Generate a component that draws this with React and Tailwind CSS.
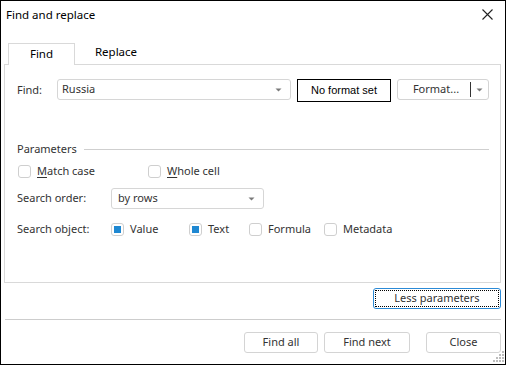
const font = "font-['Noto_Sans','Open_Sans',sans-serif]";

function Arrow() {
  return (
    <svg width="7" height="4" viewBox="0 0 7 4" className="shrink-0">
      <path d="M0.5 0.5 L6.5 0.5 L3.5 3.5 Z" fill="#7a7a7a" />
    </svg>
  );
}

function Combo({ value, className = '' }) {
  return (
    <div
      className={`flex items-center justify-between rounded-[3px] border border-[#d6d6d6] bg-white pl-[4px] pr-[8px] text-[11px] text-[#333] ${className}`}
    >
      <span>{value}</span>
      <Arrow />
    </div>
  );
}

function Check({ checked, label, underline, className = '' }) {
  return (
    <div className={`flex items-center ${className}`}>
      <div className="flex h-[13px] w-[13px] shrink-0 items-center justify-center rounded-[3px] border border-[#cfcfcf] bg-white">
        {checked && <div className="h-[7px] w-[7px] bg-[#1f88d2]" />}
      </div>
      <span className="ml-[6px] text-[11px] text-[#333]">
        {underline ? (
          <>
            <span className="underline underline-offset-2">{label[0]}</span>
            {label.slice(1)}
          </>
        ) : (
          label
        )}
      </span>
    </div>
  );
}

function Button({ children, className = '' }) {
  return (
    <div
      className={`flex h-[21px] items-center justify-center rounded-[3px] border border-[#d4d4d4] bg-white text-[11px] text-[#333] ${className}`}
    >
      {children}
    </div>
  );
}

function Grip() {
  const dots = [
    [10, 0],
    [7, 3], [10, 3],
    [4, 6], [7, 6], [10, 6],
    [1, 9], [4, 9], [7, 9], [10, 9],
  ];
  return (
    <svg width="12" height="12" viewBox="0 0 12 12">
      {dots.map(([x, y], i) => (
        <rect key={i} x={x} y={y} width="2" height="2" fill="#bdbdbd" />
      ))}
    </svg>
  );
}

export default function App() {
  return (
    <div className={`relative flex h-[365px] w-[506px] flex-col border border-black bg-white ${font}`}>
      {/* title */}
      <div className="flex h-[27px] items-center justify-between pl-[5px] pr-[12px]">
        <span className="text-[11.5px] text-black">Find and replace</span>
        <svg width="11" height="11" viewBox="0 0 11 11">
          <path d="M0.5 0.5 L10.5 10.5 M10.5 0.5 L0.5 10.5" stroke="#222" strokeWidth="1.1" />
        </svg>
      </div>

      {/* tabs */}
      <div className="mt-[14px] flex h-[22px] items-end pl-[7px]">
        <div className="relative z-10 -mb-px flex h-[22px] w-[67px] items-center justify-center border border-b-0 border-[#d9d9d9] bg-white pb-[2px] text-[11.5px] text-black">
          Find
        </div>
        <div className="flex h-[22px] w-[82px] items-center justify-center pb-[2px] text-[11.5px] text-black">
          Replace
        </div>
      </div>

      {/* panel */}
      <div className="ml-[3px] mr-[4px] flex h-[219px] flex-col border border-[#d9d9d9] pl-[12px] pr-[11px] pt-[14px]">
        <div className="flex items-start">
          <span className="w-[40px] pt-[3px] text-[11px] text-[#333]">Find:</span>
          <Combo value="Russia" className="h-[21px] w-[234px]" />
          <div className="ml-[6px] flex h-[23px] w-[94px] items-center justify-center border border-black font-['Liberation_Sans',sans-serif] text-[11px] text-black">
            No format set
          </div>
          <div className="ml-[6px] flex h-[21px] w-[92px] items-center rounded-[3px] border border-[#d4d4d4] bg-white text-[11px] text-[#333]">
            <span className="flex-1 pl-[4px] text-center">Format...</span>
            <div className="h-[15px] w-px bg-[#333]" />
            <div className="flex w-[17px] justify-center">
              <Arrow />
            </div>
          </div>
        </div>

        <div className="mt-[39px] flex h-[16px] items-center">
          <span className="text-[11px] text-[#333]">Parameters</span>
          <div className="ml-[7px] h-px flex-1 bg-[#cfcfcf]" />
        </div>

        <div className="mt-[6px] flex h-[16px] items-center pl-[1px]">
          <Check label="Match case" underline className="w-[130px]" />
          <Check label="Whole cell" underline />
        </div>

        <div className="mt-[9px] flex items-center">
          <span className="w-[94px] text-[11px] text-[#333]">Search order:</span>
          <Combo value="by rows" className="h-[21px] w-[153px] !pl-[6px]" />
        </div>

        <div className="mt-[12px] flex h-[16px] items-center">
          <span className="w-[94px] text-[11px] text-[#333]">Search object:</span>
          <Check checked label="Value" className="w-[78px]" />
          <Check checked label="Text" className="w-[60px]" />
          <Check label="Formula" className="w-[75px]" />
          <Check label="Metadata" />
        </div>
      </div>

      {/* less parameters */}
      <div className="mr-[4px] mt-[5px] flex justify-end">
        <div className="flex h-[21px] w-[128px] items-center justify-center rounded-[3px] border border-[#2b8ad6] bg-white p-px">
          <div className="flex h-full w-full items-center justify-center border border-dotted border-black text-[11px] text-[#333]">
            Less parameters
          </div>
        </div>
      </div>

      <div className="ml-[4px] mr-[4px] mt-[10px] h-px bg-[#cdcdcd]" />

      {/* bottom buttons */}
      <div className="mr-[4px] mt-[12px] flex justify-end">
        <Button className="w-[74px]">Find all</Button>
        <Button className="ml-[6px] w-[86px]">Find next</Button>
        <Button className="ml-[16px] w-[75px]">Close</Button>
      </div>

      <div className="absolute bottom-[1px] right-[1px]">
        <Grip />
      </div>
    </div>
  );
}
